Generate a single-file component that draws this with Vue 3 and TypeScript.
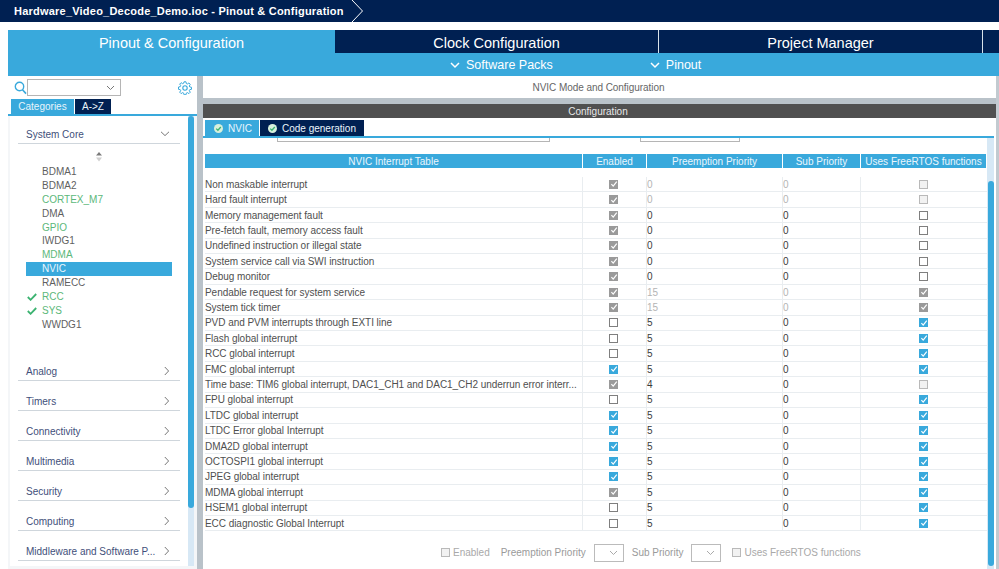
<script setup lang="ts">
type Box = 'locked' | 'off' | 'on' | 'faint';
interface Row { name: string; enabled: Box; pre: string; sub: string; rtos: Box; dim?: boolean }

const row = (name: string, enabled: Box, pre: string, rtos: Box, dim = false): Row => ({ name, enabled, pre, sub: '0', rtos, dim });

const rows: Row[] = [
  row('Non maskable interrupt', 'locked', '0', 'faint', true),
  row('Hard fault interrupt', 'locked', '0', 'faint', true),
  row('Memory management fault', 'locked', '0', 'off'),
  row('Pre-fetch fault, memory access fault', 'locked', '0', 'off'),
  row('Undefined instruction or illegal state', 'locked', '0', 'off'),
  row('System service call via SWI instruction', 'locked', '0', 'off'),
  row('Debug monitor', 'locked', '0', 'off'),
  row('Pendable request for system service', 'locked', '15', 'locked', true),
  row('System tick timer', 'locked', '15', 'locked', true),
  row('PVD and PVM interrupts through EXTI line', 'off', '5', 'on'),
  row('Flash global interrupt', 'off', '5', 'on'),
  row('RCC global interrupt', 'off', '5', 'on'),
  row('FMC global interrupt', 'on', '5', 'on'),
  row('Time base: TIM6 global interrupt, DAC1_CH1 and DAC1_CH2 underrun error interr...', 'locked', '4', 'faint'),
  row('FPU global interrupt', 'off', '5', 'on'),
  row('LTDC global interrupt', 'on', '5', 'on'),
  row('LTDC Error global Interrupt', 'on', '5', 'on'),
  row('DMA2D global interrupt', 'on', '5', 'on'),
  row('OCTOSPI1 global interrupt', 'on', '5', 'on'),
  row('JPEG global interrupt', 'on', '5', 'on'),
  row('MDMA global interrupt', 'locked', '5', 'on'),
  row('HSEM1 global interrupt', 'off', '5', 'on'),
  row('ECC diagnostic Global Interrupt', 'off', '5', 'on'),
];

const peripherals = [
  { name: 'BDMA1' },
  { name: 'BDMA2' },
  { name: 'CORTEX_M7', green: true },
  { name: 'DMA' },
  { name: 'GPIO', green: true },
  { name: 'IWDG1' },
  { name: 'MDMA', green: true },
  { name: 'NVIC', active: true },
  { name: 'RAMECC' },
  { name: 'RCC', green: true, tick: true },
  { name: 'SYS', green: true, tick: true },
  { name: 'WWDG1' },
];

const categories = ['Analog', 'Timers', 'Connectivity', 'Multimedia', 'Security', 'Computing', 'Middleware and Software P...'];
</script>

<template>
  <div class="app">
    <header class="crumb">
      <span class="crumb-text">Hardware_Video_Decode_Demo.ioc - Pinout &amp; Configuration</span>
      <svg class="crumb-arrow" width="14" height="22" viewBox="0 0 14 22"><path d="M1 0 L11.5 11 L1 22" fill="none" stroke="#fff" stroke-width="1" /></svg>
    </header>

    <nav class="tabs">
      <div class="tab tab-main">Pinout &amp; Configuration</div>
      <div class="tabs-right">
        <div class="tabs-top">
          <div class="tab tab-clock">Clock Configuration</div>
          <div class="tab tab-project">Project Manager</div>
          <div class="tab tab-rest"></div>
        </div>
        <div class="tabs-sub">
          <span class="sub-item sub-packs">
            <svg width="10" height="7" viewBox="0 0 10 7"><path d="M1 1 L5 5 L9 1" fill="none" stroke="#fff" stroke-width="1.5" /></svg>
            Software Packs
          </span>
          <span class="sub-item sub-pinout">
            <svg width="10" height="7" viewBox="0 0 10 7"><path d="M1 1 L5 5 L9 1" fill="none" stroke="#fff" stroke-width="1.5" /></svg>
            Pinout
          </span>
        </div>
      </div>
    </nav>

    <main class="body">
      <aside class="side">
        <div class="search">
          <svg class="search-icon" width="13" height="14" viewBox="0 0 13 14"><circle cx="5.5" cy="5.5" r="4.2" fill="none" stroke="#39a9dc" stroke-width="1.4" /><path d="M8.5 8.7 L12 12.6" stroke="#39a9dc" stroke-width="1.6" /></svg>
          <div class="combo">
            <svg width="9" height="6" viewBox="0 0 9 6"><path d="M1 1 L4.5 4.5 L8 1" fill="none" stroke="#777" stroke-width="1" /></svg>
          </div>
          <svg class="gear" width="14" height="14" viewBox="0 0 14 14">
            <circle cx="7" cy="7" r="2.2" fill="none" stroke="#39a9dc" stroke-width="1.1" />
            <path d="M6 .8h2l.3 1.7 1.1.5 1.5-1 1.4 1.4-1 1.5.5 1.1 1.7.3v2l-1.7.3-.5 1.1 1 1.5-1.4 1.4-1.5-1-1.1.5-.3 1.7H6l-.3-1.7-1.1-.5-1.5 1-1.4-1.4 1-1.5-.5-1.1-1.7-.3V6l1.7-.3.5-1.1-1-1.5 1.4-1.4 1.5 1 1.1-.5z" fill="none" stroke="#39a9dc" stroke-width="1" />
          </svg>
        </div>
        <div class="side-tabs">
          <span class="side-tab side-tab-on">Categories</span>
          <span class="side-tab side-tab-off">A-&gt;Z</span>
        </div>
        <div class="side-list">
          <div class="list-inner">
            <div class="cat cat-open">
              <span>System Core</span>
              <svg width="10" height="6" viewBox="0 0 10 6"><path d="M1 .8 L5 4.6 L9 .8" fill="none" stroke="#777" stroke-width="1" /></svg>
            </div>
            <div class="sort">
              <svg width="8" height="10" viewBox="0 0 8 10"><path d="M4 0 L7 3.6 H1 Z" fill="#7a7a7a" /><path d="M4 9.5 L7 5.6 H1 Z" fill="#d0d0d0" /></svg>
            </div>
            <ul class="periph">
              <li v-for="p in peripherals" :key="p.name" :class="{ green: p.green, active: p.active }">
                <svg v-if="p.tick" class="tick" width="10" height="8" viewBox="0 0 10 8"><path d="M.8 4 L3.6 6.8 L9.2 1" fill="none" stroke="#3cb371" stroke-width="1.8" /></svg>
                {{ p.name }}
              </li>
            </ul>
            <div v-for="c in categories" :key="c" class="cat">
              <span>{{ c }}</span>
              <svg width="6" height="10" viewBox="0 0 6 10"><path d="M.8 1 L4.6 5 L.8 9" fill="none" stroke="#777" stroke-width="1" /></svg>
            </div>
          </div>
          <div class="side-scroll"><div class="side-thumb"></div></div>
        </div>
      </aside>

      <div class="divider"></div>

      <section class="panel">
        <div class="mode-title">NVIC Mode and Configuration</div>
        <div class="grey-gap"></div>
        <div class="config-title">Configuration</div>
        <div class="panel-tabs">
          <span class="ptab ptab-on">
            <svg width="9" height="9" viewBox="0 0 9 9"><circle cx="4.5" cy="4.5" r="4.5" fill="#d8f0dc" /><path d="M2.2 4.6 L3.9 6.2 L6.8 3" fill="none" stroke="#3cb371" stroke-width="1.3" /></svg>
            NVIC
          </span>
          <span class="ptab ptab-off">
            <svg width="9" height="9" viewBox="0 0 9 9"><circle cx="4.5" cy="4.5" r="4.5" fill="#d8f0dc" /><path d="M2.2 4.6 L3.9 6.2 L6.8 3" fill="none" stroke="#3cb371" stroke-width="1.3" /></svg>
            Code generation
          </span>
        </div>
        <div class="content">
          <div class="table-wrap">
            <div class="stubs"><i class="stub stub-a"></i><i class="stub stub-b"></i></div>
            <div class="thead">
              <div class="th c-name">NVIC Interrupt Table</div>
              <div class="th c-en">Enabled</div>
              <div class="th c-pre">Preemption Priority</div>
              <div class="th c-sub">Sub Priority</div>
              <div class="th c-rtos">Uses FreeRTOS functions</div>
            </div>
            <div class="tbody">
              <div v-for="r in rows" :key="r.name" class="tr">
                <div class="td c-name">{{ r.name }}</div>
                <div class="td c-en center"><span class="box" :class="r.enabled"><svg v-if="r.enabled === 'locked' || r.enabled === 'on'" width="8" height="8" viewBox="0 0 9 9"><path d="M1.6 4.6 L3.6 6.8 L7.6 1.8" fill="none" stroke="#fff" stroke-width="1.3" /></svg></span></div>
                <div class="td c-pre num" :class="{ dim: r.dim }">{{ r.pre }}</div>
                <div class="td c-sub num" :class="{ dim: r.dim }">{{ r.sub }}</div>
                <div class="td c-rtos center"><span class="box" :class="r.rtos"><svg v-if="r.rtos === 'locked' || r.rtos === 'on'" width="8" height="8" viewBox="0 0 9 9"><path d="M1.6 4.6 L3.6 6.8 L7.6 1.8" fill="none" stroke="#fff" stroke-width="1.3" /></svg></span></div>
              </div>
            </div>
            <div class="filter">
              <span class="box faint"></span><span class="f-en">Enabled</span>
              <span class="f-pre">Preemption Priority</span>
              <span class="f-select"><svg width="9" height="6" viewBox="0 0 9 6"><path d="M1 1 L4.5 4.5 L8 1" fill="none" stroke="#aaa" stroke-width="1" /></svg></span>
              <span class="f-sub">Sub Priority</span>
              <span class="f-select"><svg width="9" height="6" viewBox="0 0 9 6"><path d="M1 1 L4.5 4.5 L8 1" fill="none" stroke="#aaa" stroke-width="1" /></svg></span>
              <span class="box faint f-box"></span><span class="f-en">Uses FreeRTOS functions</span>
            </div>
          </div>
          <div class="main-scroll"><div class="main-thumb"></div></div>
        </div>
      </section>
    </main>
  </div>
</template>

<style>
html, body { margin: 0; background: #fff; }
</style>

<style scoped>
.app {
  width: 999px;
  height: 569px;
  overflow: hidden;
  display: flex;
  flex-direction: column;
  background: #fff;
  font-family: "Liberation Sans", Arial, sans-serif;
  font-size: 10px;
  color: #4b4b4b;
}
.crumb {
  height: 22px;
  flex: none;
  background: #002052;
  display: flex;
  align-items: center;
  padding-left: 14px;
  color: #fff;
  box-sizing: border-box;
}
.crumb-text { font-size: 11px; font-weight: 700; letter-spacing: 0.22px; }
.crumb-arrow { margin-left: 7px; }

.tabs {
  flex: none;
  height: 46px;
  margin-top: 8px;
  margin-left: 8px;
  display: flex;
  color: #fff;
}
.tab { display: flex; align-items: center; justify-content: center; font-size: 14.5px; }
.tab-main {
  width: 327px;
  height: 46px;
  background: #39a9dc;
  align-items: flex-start;
  padding-top: 5px;
  box-sizing: border-box;
}
.tabs-right { flex: 1; display: flex; flex-direction: column; }
.tabs-top { height: 23px; display: flex; background: #002052; }
.tab-clock { width: 324px; padding-top: 2px; border-right: 1px solid #d8e2ea; box-sizing: border-box; }
.tab-project { width: 324px; padding-top: 2px; border-right: 1px solid #d8e2ea; box-sizing: border-box; }
.tab-rest { flex: 1; }
.tabs-sub {
  height: 23px;
  padding-top: 1px;
  box-sizing: border-box;
  background: #39a9dc;
  display: flex;
  align-items: center;
  font-size: 12.5px;
}
.sub-item { display: inline-flex; align-items: center; gap: 6px; }
.sub-packs { margin-left: 115px; }
.sub-pinout { margin-left: 97px; }

.body { flex: 1; display: flex; min-height: 0; margin-left: 8px; }

.side { width: 189px; flex: none; display: flex; flex-direction: column; background: #fff; }
.search { height: 23px; display: flex; align-items: center; flex: none; }
.search-icon { margin-left: 6px; }
.combo {
  width: 94px;
  height: 17px;
  border: 1px solid #b5b5b5;
  box-sizing: border-box;
  display: flex;
  align-items: center;
  justify-content: flex-end;
  padding-right: 5px;
}
.gear { margin-left: 57px; }
.side-tabs { height: 15px; display: flex; padding-left: 3px; gap: 1px; flex: none; border-bottom: 2px solid #39a9dc; color: #e8f4fb; }
.side-tab { display: flex; align-items: center; justify-content: center; }
.side-tab-on { width: 63px; background: #39a9dc; }
.side-tab-off { width: 36px; background: #002052; }
.side-list { flex: 1; display: flex; min-height: 0; background: #f4f6f8; padding: 0 3px 3px 2px; }
.list-inner { flex: 1; background: #fff; padding-left: 8px; padding-right: 8px; overflow: hidden; }
.side-scroll { width: 6px; background: #d7e8f5; flex: none; }
.side-thumb { height: 392px; background: #39a9dc; border-radius: 3px; }
.cat {
  height: 30px;
  box-sizing: border-box;
  border-bottom: 1px solid #cfd6dc;
  display: flex;
  justify-content: space-between;
  align-items: center;
  padding: 12px 10px 0 8px;
  color: #3f4f7a;
  width: 162px;
  white-space: nowrap;
}
.cat-open { height: 28px; padding-top: 9px; }
.sort { height: 18px; display: flex; justify-content: center; align-items: flex-end; width: 162px; }
.periph { list-style: none; margin: 3px 0 19px 8px; padding: 0; width: 146px; }
.periph li {
  position: relative;
  height: 13.9px;
  line-height: 13.9px;
  padding-left: 16px;
  color: #5f5f5f;
}
.periph li.green { color: #5cb87a; }
.periph li.active { background: #39a9dc; color: #eaf6fc; }
.tick { position: absolute; left: 1px; top: 3px; }

.divider { width: 6px; flex: none; background: #b9c2c9; }

.panel { flex: 1; min-width: 0; display: flex; flex-direction: column; border-right: 3px solid #c2cad0; }
.mode-title { height: 22px; flex: none; display: flex; align-items: center; justify-content: center; color: #666; padding-right: 2px; letter-spacing: -0.06px; }
.grey-gap { height: 6px; flex: none; background: #b9c2c9; }
.config-title { height: 14px; flex: none; background: #505050; color: #e8e8e8; display: flex; align-items: center; justify-content: center; padding-right: 3px; }
.panel-tabs {
  height: 18px;
  flex: none;
  display: flex;
  align-items: flex-end;
  padding-left: 2px;
  box-sizing: border-box;
  color: #eaf6fc;
}
.ptab { display: flex; align-items: center; height: 16px; gap: 5px; }
.ptab-on { width: 54px; background: #39a9dc; padding-left: 9px; box-sizing: border-box; }
.ptab-off { width: 104px; background: #002052; padding-left: 8px; box-sizing: border-box; margin-left: 1px; }
.content {
  flex: 1;
  min-height: 0;
  display: flex;
  border-top: 2px solid #39a9dc;
  margin-right: 2px;
  background: #fff;
}
.table-wrap { width: 784px; flex: none; padding-left: 2px; box-sizing: border-box; }
.stubs { height: 16px; position: relative; }
.stub { position: absolute; top: 0; height: 4px; border: 1px solid #b5b5b5; border-top: 0; box-sizing: border-box; }
.stub-a { left: 72px; width: 273px; }
.stub-b { left: 435px; width: 100px; }
.thead { display: flex; height: 14px; gap: 1px; color: #eaf6fc; }
.th { background: #39a9dc; display: flex; align-items: center; justify-content: center; }
.c-name { width: 377px; flex: none; }
.c-en { width: 63px; flex: none; }
.c-pre { width: 135px; flex: none; }
.c-sub { width: 77px; flex: none; }
.c-rtos { width: 125px; flex: none; }
.tbody { margin-top: 9px; }
.tr { display: flex; height: 15.41px; gap: 1px; border-bottom: 1px solid #e9edf0; box-sizing: border-box; }
.td { white-space: nowrap; display: flex; align-items: center; color: #4f4f4f; border-right: 1px solid #e9edf0; margin-right: -1px; }
.td.c-name { letter-spacing: -0.05px; }
.td.c-en { padding-right: 2px; width: 61px; }
.td.c-rtos { border-right: 0; }
.center { justify-content: center; }
.num { color: #3a3a3a; }
.td.dim { color: #b4b4b4; }
.box {
  width: 9px;
  height: 9px;
  box-sizing: border-box;
  display: flex;
  align-items: center;
  justify-content: center;
  border: 1px solid #7f7f7f;
  background: #fff;
  flex: none;
}
.box svg { flex: none; }
.box.locked { background: #9a9a9a; border-color: #9a9a9a; }
.box.on { background: #39a9dc; border-color: #39a9dc; }
.box.faint { background: #f2f2f2; border-color: #b9b9b9; }
.filter {
  margin-top: 12.5px;
  display: flex;
  align-items: center;
  color: #a9a9a9;
  height: 18px;
  padding-left: 236px;
}
.f-en { margin-left: 3px; }
.f-pre { margin-left: 11px; color: #9a9a9a; }
.f-sub { margin-left: 8px; color: #9a9a9a; }
.f-box { margin-left: 11px; }
.f-select {
  width: 30px;
  height: 18px;
  margin-left: 8px;
  border: 1px solid #bbb;
  box-sizing: border-box;
  display: flex;
  align-items: center;
  justify-content: flex-end;
  padding-right: 5px;
}
.main-scroll { width: 7px; flex: none; background: #d7e8f5; padding-top: 43px; box-sizing: border-box; }
.main-thumb { height: 385px; width: 6px; margin-left: 1px; background: #39a9dc; border-radius: 3px; }
</style>
